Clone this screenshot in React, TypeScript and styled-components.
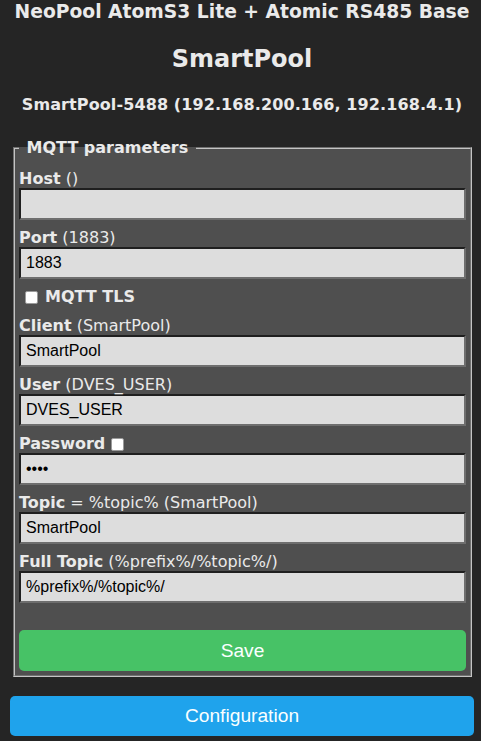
import React from 'react'
import styled, { createGlobalStyle } from 'styled-components'

const GlobalStyle = createGlobalStyle`
  html, body {
    margin: 0;
    padding: 0;
    background: #252525;
  }
  body {
    font-family: "DejaVu Sans", Verdana, sans-serif;
    color: #eaeaea;
  }
`

const Page = styled.div`
  width: 464px;
  padding: 0 7px 4px 10px;
`

const Header = styled.div`
  text-align: center;
  color: #eaeaea;
`

const Module = styled.h3`
  margin: 0;
  padding-top: 1px;
  font-size: 18.72px;
  line-height: 22px;
  font-weight: bold;
`

const Device = styled.h2`
  margin: 22px 0 0;
  font-size: 24px;
  line-height: 28px;
  font-weight: bold;
`

const Host = styled.h4`
  margin: 22px 0 0;
  font-size: 16px;
  line-height: 19px;
  font-weight: bold;
  letter-spacing: 0.1px;
`

const Fieldset = styled.fieldset`
  margin: 24px 2px 0 3px;
  padding: 4px 4px 4px;
  min-width: 0;
  background: #4f4f4f;
  border: 2px groove #c4c4c4;
`

const Legend = styled.legend`
  padding: 0 2px;
  font-size: 16px;
  line-height: 19px;
  font-weight: bold;
  color: #eaeaea;
`

const Field = styled.div`
  margin: 8px 0;
`

const Label = styled.div`
  font-size: 16px;
  line-height: 19px;
  color: #eaeaea;
  white-space: nowrap;

  b {
    font-weight: bold;
  }
`

const CheckRow = styled.div`
  height: 21px;
  font-size: 16px;
  line-height: 19px;
  color: #eaeaea;
  padding-left: 6px;

  b {
    margin-left: 7px;
  }
`

const Box = styled.span<{ $gap?: number }>`
  display: inline-block;
  width: 11px;
  height: 11px;
  margin-left: ${p => p.$gap ?? 0}px;
  vertical-align: -2px;
  background: #ffffff;
  border: 1px solid #9a9a9a;
  border-radius: 2px;
`

const Input = styled.input`
  display: block;
  width: 100%;
  box-sizing: border-box;
  height: 32px;
  margin: 0;
  padding: 5px;
  font-family: "Liberation Sans", Arial, sans-serif;
  font-size: 16px;
  color: #000000;
  background: #dddddd;
  border-width: 2px;
  border-style: solid;
  border-color: #1f1f1f #6e6e6e #6e6e6e #1f1f1f;
  outline: none;
`

const Button = styled.button<{ $color: string; $h: number; $top: number }>`
  display: block;
  width: 100%;
  height: ${p => p.$h}px;
  margin: ${p => p.$top}px 0 0;
  padding: 0;
  border: 0;
  border-radius: 5px;
  background: ${p => p.$color};
  color: #faffff;
  font-family: "Liberation Sans", Arial, sans-serif;
  font-size: 19.2px;
  cursor: pointer;
`

const fields = [
  { label: 'Client', hint: '(SmartPool)', value: 'SmartPool' },
  { label: 'User', hint: '(DVES_USER)', value: 'DVES_USER' },
]

export default function App() {
  return (
    <>
      <GlobalStyle />
      <Page>
        <Header>
          <Module>NeoPool AtomS3 Lite + Atomic RS485 Base</Module>
          <Device>SmartPool</Device>
          <Host>SmartPool-5488 (192.168.200.166, 192.168.4.1)</Host>
        </Header>

        <Fieldset>
          <Legend>&nbsp;MQTT parameters&nbsp;</Legend>

          <Field>
            <Label><b>Host</b> ()</Label>
            <Input defaultValue="" />
          </Field>
          <Field>
            <Label><b>Port</b> (1883)</Label>
            <Input defaultValue="1883" />
          </Field>
          <CheckRow>
            <Box />
            <b>MQTT TLS</b>
          </CheckRow>
          {fields.map(f => (
            <Field key={f.label}>
              <Label><b>{f.label}</b> {f.hint}</Label>
              <Input defaultValue={f.value} />
            </Field>
          ))}
          <Field>
            <Label><b>Password</b><Box $gap={6} /></Label>
            <Input type="password" defaultValue="****" />
          </Field>
          <Field>
            <Label><b>Topic</b> = %topic% (SmartPool)</Label>
            <Input defaultValue="SmartPool" />
          </Field>
          <Field>
            <Label><b>Full Topic</b> (%prefix%/%topic%/)</Label>
            <Input defaultValue="%prefix%/%topic%/" />
          </Field>

          <Button $color="#47c266" $h={41} $top={27}>Save</Button>
        </Fieldset>

        <Button $color="#1fa3ec" $h={40} $top={19}>Configuration</Button>
      </Page>
    </>
  )
}
